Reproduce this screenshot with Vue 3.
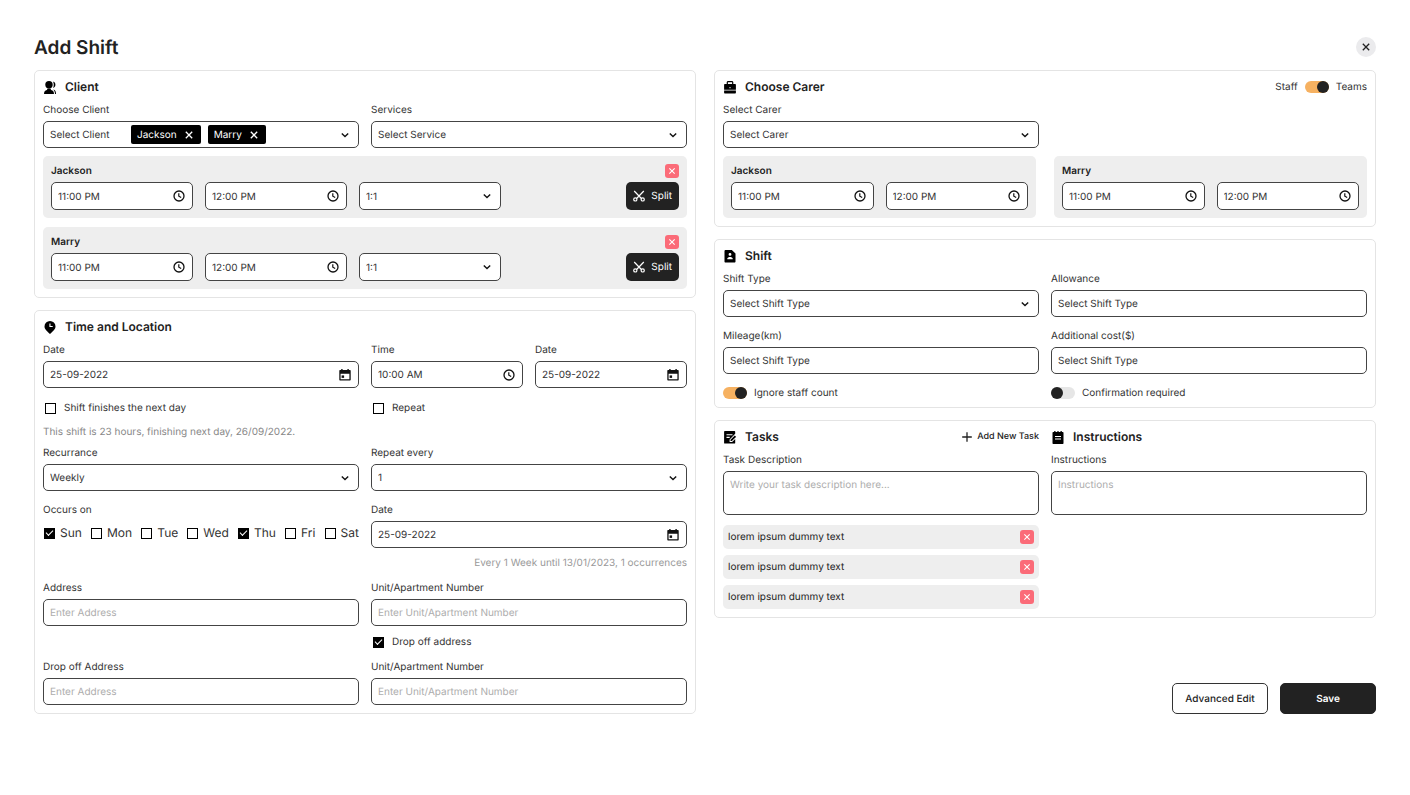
<script setup>
import { h, reactive, ref } from 'vue'

const glyphs = {
  chevron: '<path d="M2.8 4.5 6 7.6l3.2-3.1" fill="none" stroke="currentColor" stroke-width="1.4"/>',
  clock: '<circle cx="6" cy="6" r="5" fill="none" stroke="currentColor" stroke-width="1.3"/><path d="M5.8 3.2v3l2.4 1.3" fill="none" stroke="currentColor" stroke-width="1.2"/>',
  calendar: '<path fill-rule="evenodd" d="M2.2 0h1.4v1h4.8V0h1.4v1h1.2a.7.7 0 0 1 .7.7v9.1a.7.7 0 0 1-.7.7H1a.7.7 0 0 1-.7-.7V1.7A.7.7 0 0 1 1 1h1.2zM1.6 4.7v5.5h8.8V4.7z"/><path d="M2.6 6.4h2.5v2.5H2.6z"/>',
  cross: '<path d="m2.8 2.8 6.4 6.4m0-6.4L2.8 9.2" fill="none" stroke="currentColor" stroke-width="1.3"/>',
  plus: '<path d="M6 1.200v9.600M1.200 6h9.600" fill="none" stroke="currentColor" stroke-width="1.300"/>',
  scissors: '<g fill="none" stroke="currentColor" stroke-width="1.2"><path d="m1.2 1 7.200 7.500M10.800 1 3.600 8.500"/><circle cx="2.300" cy="9.400" r="1.600"/><circle cx="9.700" cy="9.400" r="1.600"/></g>',
  people: '<ellipse cx="5" cy="3.700" rx="3.700" ry="3.700"/><path d="M0 12.900c0-2.200.9-3.400 2.900-3.900L3.600 7.500h2.800l.7 1.500C9.100 9.500 10 10.700 10 12.900z"/><path d="M9 .5c1.500.3 2.400 1.500 2.400 3.200S10.500 6.600 9.100 6.900c.9-1.900.9-4.400-.1-6.400zM9.300 8.500c2 .6 2.700 2 2.700 4.400h-1c0-1.900-.6-3.300-1.700-4.400z"/>',
  pin: '<path fill-rule="evenodd" d="M6 0a5.500 5.500 0 0 1 5.500 5.500c0 3-2.500 4.400-5.500 7.500C3 9.900.5 8.500.5 5.500A5.500 5.500 0 0 1 6 0zM5.400 2.500v3.600h3.300V5H6.500V2.500z"/>',
  briefcase: '<path fill-rule="evenodd" d="M3.600 0h4.800l.9 1v2h1.900c.4 0 .7.300.7.700v5H.1v-5c0-.4.300-.7.700-.7h1.900V1zm.3 1.200V3h4.200V1.200zM5.500 6v1.200h1V6z"/><path d="M.1 9.400h11.800v2.400c0 .4-.3.700-.7.700H.8a.7.7 0 0 1-.7-.7z"/>',
  badge: '<path fill-rule="evenodd" d="M1.400 0h6.400l3.700 3.500v8c0 .6-.4 1-1 1h-9c-.6 0-1-.4-1-1V1c0-.6.4-1 .9-1zM6 3a1.400 1.400 0 1 0 0 2.800A1.400 1.400 0 0 0 6 3zM3.300 9.300h5.400v-.8C8.700 7.400 7.200 6.900 6 6.900s-2.700.5-2.700 1.600z"/>',
  note: '<path fill-rule="evenodd" d="M.8 0h9.700c.4 0 .7.300.7.700v2.100L5.600 8.400v2.500h2.500l3.100-3v4c0 .4-.3.700-.7.700H.8a.7.7 0 0 1-.7-.7V.7C.1.300.4 0 .8 0zM2.500 3.200v1.100h6V3.200zm0 2.600v1.100h3.200V5.800z"/><path d="m6.500 8.800 4.300-4.300 1.300 1.300-4.300 4.300H6.500z"/>',
  pad: '<path fill-rule="evenodd" d="M2.200 0h1.300v1.100h1.900V0h1.200v1.100h1.900V0h1.300v1.100h1c.4 0 .7.300.7.700v10.400c0 .4-.3.700-.7.700H1.200a.7.7 0 0 1-.7-.7V1.800c0-.4.300-.7.700-.7h1zM3 5v1.100h6V5zm0 2.500v1.100h6V7.500z"/>'
}
const Icon = (props) =>
  h('svg', { viewBox: props.box || '0 0 12 12', fill: 'currentColor', 'aria-hidden': 'true', innerHTML: glyphs[props.name] })
Icon.props = ['name', 'box']

const clients = ['Jackson', 'Marry']
const days = reactive([
  { name: 'Sun', on: true },
  { name: 'Mon', on: false },
  { name: 'Tue', on: false },
  { name: 'Wed', on: false },
  { name: 'Thu', on: true },
  { name: 'Fri', on: false },
  { name: 'Sat', on: false }
])
const tasks = ref(['lorem ipsum dummy text', 'lorem ipsum dummy text', 'lorem ipsum dummy text'])
</script>

<template>
  <main class="page">
    <header class="top">
      <h1>Add Shift</h1>
      <button class="close" type="button" aria-label="Close"><Icon name="cross" /></button>
    </header>

    <form class="columns" @submit.prevent>
      <div class="column">
        <section class="card">
          <h2><Icon name="people" box="0 0 12 13" />Client</h2>
          <div class="pair">
            <div class="field">
              <label for="client">Choose Client</label>
              <div class="control">
                <select id="client"><option>Select Client</option></select>
                <div class="chips">
                  <button v-for="c in clients" :key="c" class="chip" type="button" :aria-label="'Remove ' + c">{{ c }}<Icon name="cross" /></button>
                </div>
                <Icon name="chevron" />
              </div>
            </div>
            <div class="field">
              <label for="service">Services</label>
              <div class="control">
                <select id="service"><option>Select Service</option></select>
                <Icon name="chevron" />
              </div>
            </div>
          </div>
          <div class="groups">
            <div v-for="c in clients" :key="c" class="group">
              <div class="group-head">
                <h3>{{ c }}</h3>
                <button class="remove" type="button" :aria-label="'Remove ' + c"><Icon name="cross" /></button>
              </div>
              <div class="slots">
                <div class="control tall"><input type="text" value="11:00 PM" :aria-label="c + ' start'" /><Icon name="clock" /></div>
                <div class="control tall"><input type="text" value="12:00 PM" :aria-label="c + ' end'" /><Icon name="clock" /></div>
                <div class="control tall">
                  <select :aria-label="c + ' ratio'"><option>1:1</option></select>
                  <Icon name="chevron" />
                </div>
                <button class="split" type="button"><Icon name="scissors" />Split</button>
              </div>
            </div>
          </div>
        </section>

        <section class="card">
          <h2><Icon name="pin" box="0 0 12 13" />Time and Location</h2>
          <div class="pair">
            <div class="field">
              <label for="date1">Date</label>
              <div class="control"><input id="date1" type="text" value="25-09-2022" /><Icon name="calendar" /></div>
            </div>
            <div class="pair">
              <div class="field">
                <label for="time1">Time</label>
                <div class="control"><input id="time1" type="text" value="10:00 AM" /><Icon name="clock" /></div>
              </div>
              <div class="field">
                <label for="date2">Date</label>
                <div class="control"><input id="date2" type="text" value="25-09-2022" /><Icon name="calendar" /></div>
              </div>
            </div>
          </div>
          <div class="pair checks">
            <label class="check"><input class="box" type="checkbox" />Shift finishes the next day</label>
            <label class="check"><input class="box" type="checkbox" />Repeat</label>
          </div>
          <p class="hint">This shift is 23 hours, finishing next day, 26/09/2022.</p>
          <div class="pair">
            <div class="field">
              <label for="recur">Recurrance</label>
              <div class="control">
                <select id="recur"><option>Weekly</option></select>
                <Icon name="chevron" />
              </div>
            </div>
            <div class="field">
              <label for="every">Repeat every</label>
              <div class="control">
                <select id="every"><option>1</option></select>
                <Icon name="chevron" />
              </div>
            </div>
          </div>
          <div class="pair next">
            <div class="field" role="group" aria-labelledby="occurs">
              <span id="occurs">Occurs on</span>
              <div class="days">
                <label v-for="d in days" :key="d.name" class="day"><input v-model="d.on" class="box" type="checkbox" />{{ d.name }}</label>
              </div>
            </div>
            <div class="field">
              <label for="until">Date</label>
              <div class="control"><input id="until" type="text" value="25-09-2022" /><Icon name="calendar" /></div>
            </div>
          </div>
          <p class="hint end">Every 1 Week until 13/01/2023, 1 occurrences</p>
          <div class="pair next">
            <div class="field">
              <label for="addr">Address</label>
              <div class="control"><input id="addr" type="text" placeholder="Enter Address" /></div>
            </div>
            <div class="field">
              <label for="unit">Unit/Apartment Number</label>
              <div class="control"><input id="unit" type="text" placeholder="Enter Unit/Apartment Number" /></div>
            </div>
          </div>
          <div class="pair drop">
            <label class="check second"><input class="box" type="checkbox" checked />Drop off address</label>
          </div>
          <div class="pair">
            <div class="field">
              <label for="addr2">Drop off Address</label>
              <div class="control"><input id="addr2" type="text" placeholder="Enter Address" /></div>
            </div>
            <div class="field">
              <label for="unit2">Unit/Apartment Number</label>
              <div class="control"><input id="unit2" type="text" placeholder="Enter Unit/Apartment Number" /></div>
            </div>
          </div>
        </section>
      </div>

      <div class="column">
        <section class="card">
          <div class="head">
            <h2><Icon name="briefcase" box="0 0 12 13" />Choose Carer</h2>
            <label class="switch">Staff<input class="toggle" type="checkbox" role="switch" checked />Teams</label>
          </div>
          <div class="pair">
            <div class="field">
              <label for="carer">Select Carer</label>
              <div class="control">
                <select id="carer"><option>Select Carer</option></select>
                <Icon name="chevron" />
              </div>
            </div>
          </div>
          <div class="carers">
            <div v-for="c in clients" :key="c" class="group">
              <div class="group-head"><h3>{{ c }}</h3></div>
              <div class="pair">
                <div class="control tall"><input type="text" value="11:00 PM" :aria-label="c + ' carer start'" /><Icon name="clock" /></div>
                <div class="control tall"><input type="text" value="12:00 PM" :aria-label="c + ' carer end'" /><Icon name="clock" /></div>
              </div>
            </div>
          </div>
        </section>

        <section class="card">
          <h2><Icon name="badge" box="0 0 12 13" />Shift</h2>
          <div class="pair">
            <div class="field">
              <label for="type">Shift Type</label>
              <div class="control">
                <select id="type"><option>Select Shift Type</option></select>
                <Icon name="chevron" />
              </div>
            </div>
            <div class="field">
              <label for="allow">Allowance</label>
              <div class="control"><input id="allow" type="text" value="Select Shift Type" /></div>
            </div>
          </div>
          <div class="pair next">
            <div class="field">
              <label for="mile">Mileage(km)</label>
              <div class="control"><input id="mile" type="text" value="Select Shift Type" /></div>
            </div>
            <div class="field">
              <label for="cost">Additional cost($)</label>
              <div class="control"><input id="cost" type="text" value="Select Shift Type" /></div>
            </div>
          </div>
          <div class="pair toggles">
            <label class="switch"><input class="toggle" type="checkbox" role="switch" checked />Ignore staff count</label>
            <label class="switch"><input class="toggle" type="checkbox" role="switch" />Confirmation required</label>
          </div>
        </section>

        <section class="card pair">
          <div>
            <div class="head">
              <h2><Icon name="note" box="0 0 12 13" />Tasks</h2>
              <button class="add" type="button"><Icon name="plus" />Add New Task</button>
            </div>
            <div class="field">
              <label for="task">Task Description</label>
              <textarea id="task" placeholder="Write your task description here..."></textarea>
            </div>
            <ul class="tasks">
              <li v-for="(t, i) in tasks" :key="i">
                {{ t }}
                <button class="remove" type="button" aria-label="Remove task" @click="tasks.splice(i, 1)"><Icon name="cross" /></button>
              </li>
            </ul>
          </div>
          <div>
            <h2><Icon name="pad" box="0 0 12 13" />Instructions</h2>
            <div class="field">
              <label for="instr">Instructions</label>
              <textarea id="instr" placeholder="Instructions"></textarea>
            </div>
          </div>
        </section>

        <footer class="actions">
          <button class="action" type="button">Advanced Edit</button>
          <button class="action primary" type="submit">Save</button>
        </footer>
      </div>
    </form>
  </main>
</template>

<style>
body {
  background: #fff;
}
</style>

<style scoped>
* {
  box-sizing: border-box;
}
.page {
  padding: 36px 34px;
  color: #333;
  font: 400 10px/14px Inter, "Liberation Sans", sans-serif;
  text-rendering: geometricPrecision;
}
h1,
h2,
h3,
p,
ul {
  margin: 0;
  padding: 0;
}
button,
input,
select,
textarea {
  margin: 0;
  padding: 0;
  border: 0;
  background: none;
  color: inherit;
  font: inherit;
  text-rendering: inherit;
}
button {
  cursor: pointer;
}
svg {
  display: block;
  flex: none;
  width: 12px;
  height: 12px;
}
.top {
  display: flex;
  align-items: center;
  justify-content: space-between;
  height: 22px;
  margin-bottom: 12px;
}
h1 {
  padding-top: 2px;
  color: #222;
  font-size: 19px;
  font-weight: 600;
  line-height: 22px;
}
.close {
  display: grid;
  place-items: center;
  width: 20px;
  height: 20px;
  border-radius: 50%;
  background: #ebebed;
  color: #222;
}
.columns {
  display: grid;
  grid-template-columns: 1fr 1fr;
  gap: 18px;
}
.column {
  display: flex;
  flex-direction: column;
  gap: 12px;
  min-width: 0;
}
.card {
  padding: 8px;
  border: 1px solid #e4e4e4;
  border-radius: 5px;
}
h2 {
  display: flex;
  align-items: center;
  gap: 9px;
  margin-bottom: 8px;
  padding-left: 1px;
  color: #222;
  font-size: 12px;
  font-weight: 600;
  line-height: 16px;
}
h2 svg {
  height: 13px;
  color: #000;
}
.head {
  display: flex;
  align-items: flex-start;
  justify-content: space-between;
}
.pair {
  display: grid;
  grid-template-columns: 1fr 1fr;
  gap: 12px;
}
.pair > * {
  min-width: 0;
}
.next {
  margin-top: 12px;
}
.field {
  display: flex;
  flex-direction: column;
  gap: 4px;
}
.control {
  display: grid;
  grid-template-columns: 1fr;
  align-items: center;
  height: 27px;
  border: 1px solid #444;
  border-radius: 5px;
  background: #fff;
}
.tall {
  height: 28px;
}
.control > * {
  grid-area: 1 / 1;
}
.control input,
.control select {
  width: 100%;
  height: 100%;
  padding: 1px 24px 0 6px;
  border-radius: 4px;
  appearance: none;
}
.control > svg {
  justify-self: end;
  margin-right: 7px;
  color: #111;
  pointer-events: none;
}
::placeholder {
  color: #adadad;
  opacity: 1;
}
.chips {
  display: flex;
  gap: 7px;
  justify-self: start;
  margin-left: 87px;
}
.chip {
  display: flex;
  align-items: center;
  gap: 6px;
  height: 19px;
  padding: 0 6px;
  border-radius: 2px;
  background: #000;
  color: #fff;
}
.groups {
  display: grid;
  gap: 9px;
  margin-top: 8px;
}
.carers {
  display: grid;
  grid-template-columns: 1fr 1fr;
  gap: 18px;
  margin-top: 8px;
}
.group {
  padding: 8px;
  border-radius: 5px;
  background: #eee;
}
.group-head {
  display: flex;
  justify-content: space-between;
  margin-bottom: 4px;
}
h3 {
  color: #222;
  font-size: 10px;
  font-weight: 600;
  line-height: 14px;
}
.remove {
  display: grid;
  place-items: center;
  width: 14px;
  height: 14px;
  border-radius: 3px;
  background: #fb6b78;
  color: #fff;
}
.remove svg {
  width: 10px;
  height: 10px;
}
.slots {
  display: grid;
  grid-template-columns: repeat(3, minmax(0, 142px)) 1fr;
  gap: 12px;
}
.split {
  display: flex;
  align-items: center;
  justify-self: end;
  gap: 6px;
  height: 28px;
  padding: 0 7px;
  border-radius: 5px;
  background: #222;
  color: #fff;
}
.checks {
  margin-top: 12px;
}
.check {
  display: flex;
  align-items: center;
  gap: 8px;
  height: 16px;
  padding-left: 2px;
}
.second {
  grid-column: 2;
}
.box {
  display: grid;
  place-items: center;
  flex: none;
  width: 11px;
  height: 11px;
  border: 1px solid #000;
  background: #fff;
  appearance: none;
}
.box:checked {
  background: #000;
}
.box:checked::before {
  content: "";
  width: 6px;
  height: 3px;
  margin-bottom: 2px;
  border: solid #fff;
  border-width: 0 0 1px 1px;
  transform: rotate(-45deg);
}
.hint {
  margin: 9px 0 7px;
  color: #888;
}
.end {
  margin: 8px 0 0;
  color: #999;
  text-align: right;
}
.end + .next {
  margin-top: 11px;
}
.days {
  display: flex;
  align-items: center;
  justify-content: space-between;
  height: 24px;
  padding-left: 1px;
  font-size: 12px;
}
.day {
  display: flex;
  align-items: center;
  gap: 5px;
}
.drop {
  margin: 8px 0 10px;
}
.switch {
  display: flex;
  align-items: center;
  gap: 7px;
}
.head .switch {
  height: 16px;
}
.toggles {
  margin-top: 13px;
}
.toggles .switch {
  height: 12px;
}
.toggle {
  display: flex;
  flex: none;
  width: 24px;
  height: 12px;
  border-radius: 6px;
  background: #e6e6e6;
  appearance: none;
}
.toggle::before {
  content: "";
  width: 12px;
  height: 12px;
  border-radius: 50%;
  background: #222;
}
.toggle:checked {
  justify-content: flex-end;
  background: #f6b161;
}
.add {
  display: flex;
  align-items: center;
  gap: 4px;
  height: 16px;
  color: #222;
  font-size: 9px;
  font-weight: 500;
}
textarea {
  display: block;
  width: 100%;
  height: 44px;
  padding: 6px;
  border: 1px solid #444;
  border-radius: 5px;
  resize: none;
}
.tasks {
  display: grid;
  gap: 6px;
  margin-top: 10px;
  list-style: none;
}
.tasks li {
  display: flex;
  align-items: center;
  justify-content: space-between;
  height: 24px;
  padding: 0 5px;
  border-radius: 5px;
  background: #eee;
  color: #222;
}
.actions {
  display: flex;
  justify-content: flex-end;
  gap: 12px;
  margin-top: auto;
}
.action {
  width: 96px;
  height: 31px;
  border: 1px solid #333;
  border-radius: 5px;
  color: #222;
  font-weight: 500;
}
.primary {
  border-color: #222;
  background: #222;
  color: #fff;
  font-weight: 600;
}
</style>
